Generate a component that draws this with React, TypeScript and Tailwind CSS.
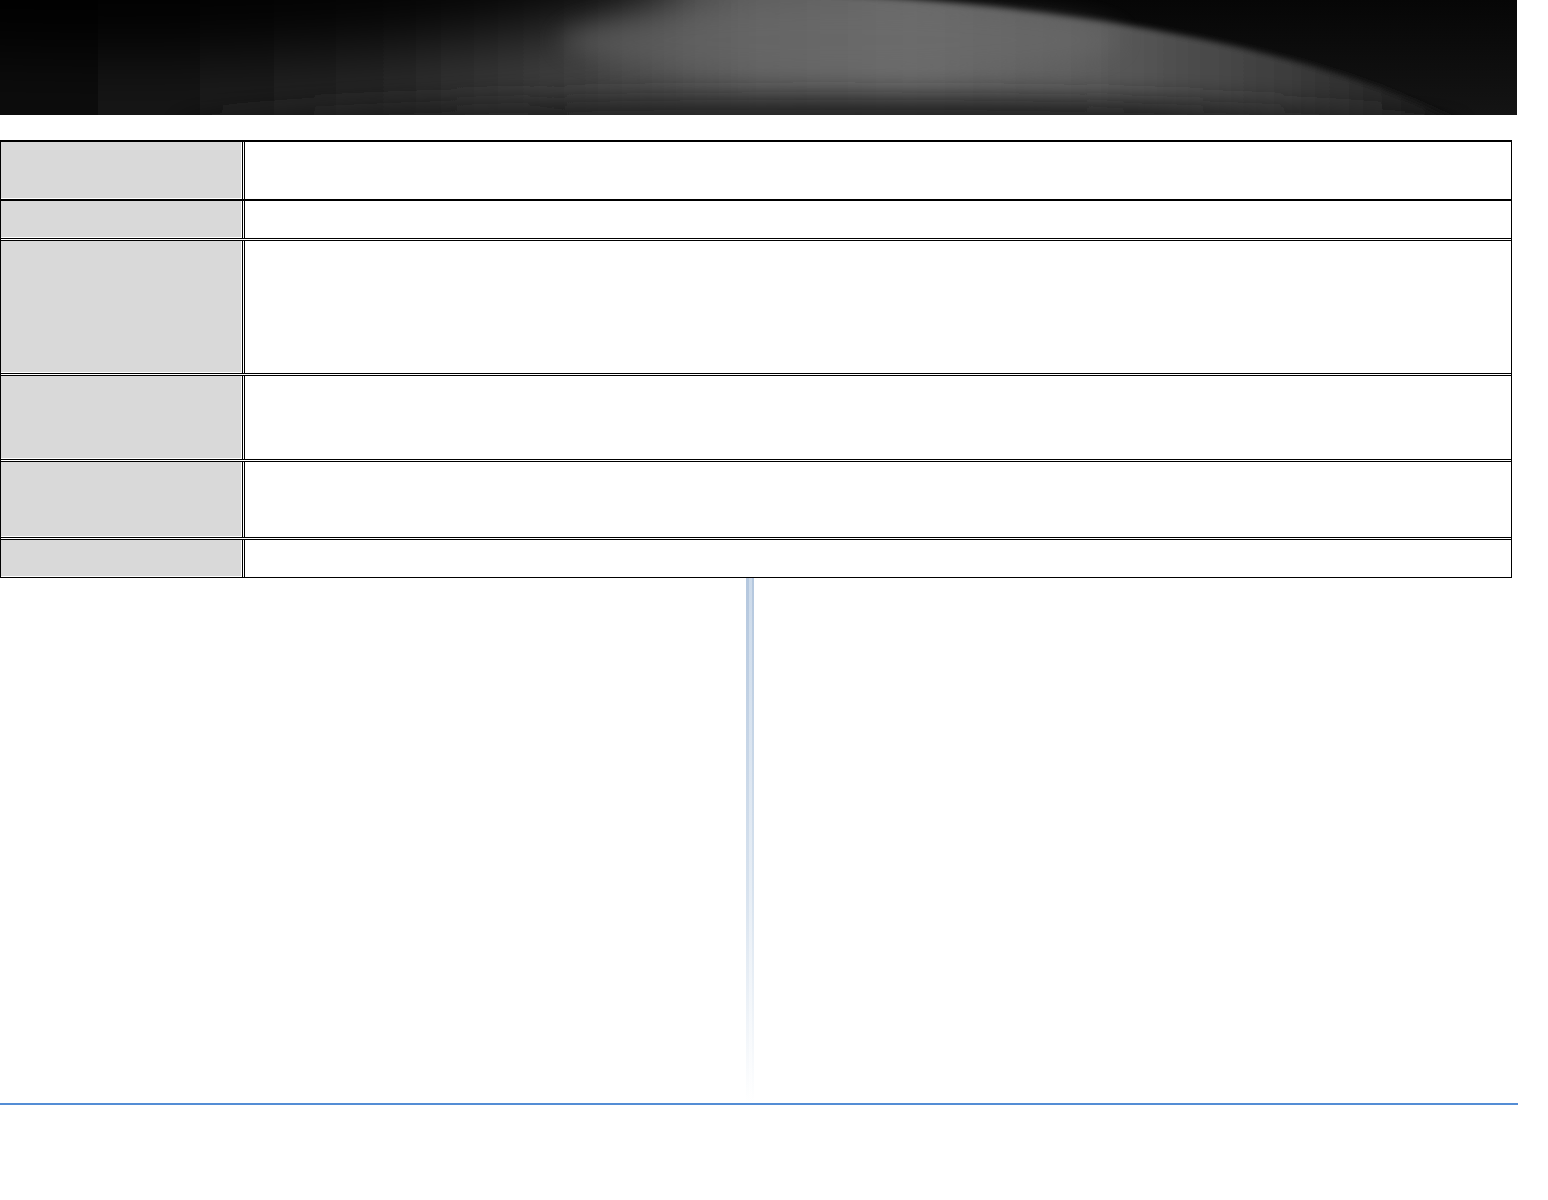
import React from "react";

type Row = { h: string; line: "thick" | "double" | "none" };

// row heights between the rule lines, top to bottom
const ROWS: Row[] = [
  { h: "h-[57px]", line: "thick" },
  { h: "h-[37px]", line: "double" },
  { h: "h-[132px]", line: "double" },
  { h: "h-[83px]", line: "double" },
  { h: "h-[75px]", line: "double" },
  { h: "h-[37px]", line: "none" },
];

function HeaderBanner() {
  return (
    <div className="w-[1517px] h-[115px] bg-[#070707] overflow-hidden">
      <svg width="1517" height="115" viewBox="0 0 1517 115">
        <defs>
          <filter id="blurBig" x="-20%" y="-80%" width="140%" height="260%">
            <feGaussianBlur stdDeviation="12" />
          </filter>
          <filter id="blurHuge" x="-30%" y="-100%" width="160%" height="300%">
            <feGaussianBlur stdDeviation="30" />
          </filter>
          <filter id="blurEdge" x="-10%" y="-30%" width="120%" height="160%">
            <feGaussianBlur stdDeviation="3" />
          </filter>
          <linearGradient id="bgV" x1="0" y1="0" x2="0" y2="1">
            <stop offset="0" stopColor="#060606" />
            <stop offset="1" stopColor="#141414" />
          </linearGradient>
          <linearGradient id="arcH" x1="0" y1="0" x2="1517" y2="0" gradientUnits="userSpaceOnUse">
            <stop offset="0" stopColor="#0a0a0a" />
            <stop offset="0.12" stopColor="#181818" />
            <stop offset="0.25" stopColor="#282828" />
            <stop offset="0.38" stopColor="#404040" />
            <stop offset="0.5" stopColor="#5e5e5e" />
            <stop offset="0.6" stopColor="#696969" />
            <stop offset="0.72" stopColor="#5c5c5c" />
            <stop offset="0.85" stopColor="#3c3c3c" />
            <stop offset="0.95" stopColor="#1c1c1c" />
          </linearGradient>
          <linearGradient id="darkBand" x1="0" y1="0" x2="1517" y2="0" gradientUnits="userSpaceOnUse">
            <stop offset="0" stopColor="#151515" stopOpacity="0" />
            <stop offset="0.25" stopColor="#202020" stopOpacity="0.9" />
            <stop offset="0.75" stopColor="#242424" stopOpacity="1" />
            <stop offset="0.95" stopColor="#1a1a1a" stopOpacity="0.4" />
          </linearGradient>
        </defs>
        <rect width="1517" height="115" fill="url(#bgV)" />
        <path
          d="M-20,-10 L720,-10 C1020,-4 1300,40 1465,125 L-20,125 Z"
          fill="url(#arcH)"
          filter="url(#blurEdge)"
        />
        {/* darken the top-left so the lit band rises toward the middle */}
        <ellipse cx="120" cy="-30" rx="560" ry="85" fill="#060606" opacity="0.9" filter="url(#blurHuge)" />
        <ellipse cx="840" cy="40" rx="280" ry="35" fill="#6e6e6e" opacity="0.45" filter="url(#blurBig)" />
        <ellipse cx="820" cy="124" rx="650" ry="28" fill="url(#darkBand)" filter="url(#blurBig)" />
      </svg>
    </div>
  );
}

function RuleLine({ kind }: { kind: "thick" | "double" }) {
  if (kind === "thick") return <div className="h-[2px] bg-black" />;
  return <div className="h-[3px] border-y border-black bg-white" />;
}

function SpecTable() {
  return (
    <div className="w-[1512px] border-x border-black bg-white">
      <div className="h-[2px] bg-black" />
      {ROWS.map((row, i) => (
        <React.Fragment key={i}>
          <div className={`flex ${row.h}`}>
            <div className="w-[240px] bg-[#d9d9d9] border-b border-white" />
            <div className="w-[1px] bg-white" />
            <div className="w-[3px] border-x border-black bg-white" />
            <div className="flex-1 bg-white" />
          </div>
          {row.line !== "none" && <RuleLine kind={row.line} />}
        </React.Fragment>
      ))}
      <div className="h-[1px] bg-black" />
    </div>
  );
}

export default function App() {
  return (
    <div className="w-[1548px] h-[1200px] bg-white overflow-hidden font-['Liberation_Sans',sans-serif]">
      <HeaderBanner />
      <div className="mt-[25px]">
        <SpecTable />
      </div>
      {/* decorative glossy divider below the table */}
      <div className="flex h-[525px]">
        <div className="w-[746px]" />
        <div className="w-[8px] bg-gradient-to-b from-[#b4c7de] via-[#d8e3ef] via-60% to-white">
          <div className="mx-auto h-full w-[3px] bg-gradient-to-b from-[#d6e2ef] to-white opacity-70" />
        </div>
      </div>
      <div className="h-[2px] w-[1518px] bg-[#548dd5]" />
    </div>
  );
}
